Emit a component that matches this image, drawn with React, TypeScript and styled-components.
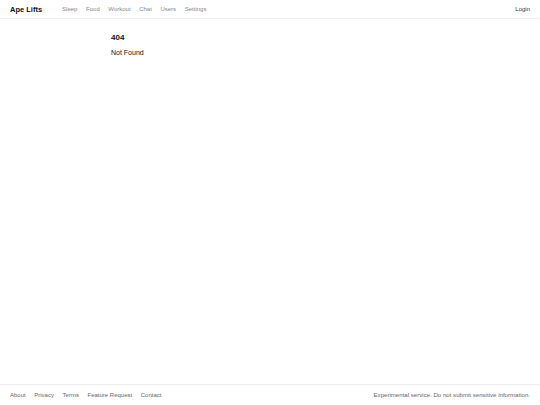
import React from "react";
import styled, { createGlobalStyle } from "styled-components";

const GlobalStyle = createGlobalStyle`
  html, body {
    margin: 0;
    padding: 0;
    background: #fff;
  }
  body {
    font-family: "Liberation Sans", Arial, sans-serif;
    color: #111;
    -webkit-font-smoothing: antialiased;
  }
`;

const Page = styled.div`
  display: flex;
  flex-direction: column;
  min-height: 100vh;
`;

const Header = styled.header`
  display: flex;
  align-items: center;
  height: 19px;
  padding: 0 10px;
  border-bottom: 1px solid #eeeeee;
  box-sizing: border-box;
`;

const Brand = styled.a`
  font-size: 7.5px;
  font-weight: 700;
  color: #111;
  text-decoration: none;
  margin-right: 20px;
`;

const Nav = styled.nav`
  display: flex;
  gap: 8.6px;
  flex: 1;
`;

const NavLink = styled.a<{ $strong?: boolean }>`
  font-size: 6px;
  color: ${(p) => (p.$strong ? "#333" : "#888")};
  text-decoration: none;
`;

const Main = styled.main`
  flex: 1;
  width: 318px;
  margin: 0 auto;
  padding-top: 14px;
`;

const Title = styled.h1`
  font-size: 8px;
  font-weight: 700;
  margin: 0 0 7px;
`;

const Message = styled.p`
  font-size: 7px;
  margin: 0;
`;

const Footer = styled.footer`
  display: flex;
  align-items: center;
  justify-content: space-between;
  height: 21px;
  padding: 0 10px 1px;
  border-top: 1px solid #eeeeee;
  box-sizing: border-box;
`;

const FooterLinks = styled.div`
  display: flex;
  gap: 8.6px;
`;

const FooterLink = styled.a`
  font-size: 6px;
  color: #666;
  text-decoration: none;
`;

const Notice = styled.span`
  font-size: 6.1px;
  color: #666;
`;

const navItems = ["Sleep", "Food", "Workout", "Chat", "Users", "Settings"];
const footerItems = ["About", "Privacy", "Terms", "Feature Request", "Contact"];

export default function App() {
  return (
    <>
      <GlobalStyle />
      <Page>
        <Header>
          <Brand href="#">Ape Lifts</Brand>
          <Nav>
            {navItems.map((item) => (
              <NavLink key={item} href="#">
                {item}
              </NavLink>
            ))}
          </Nav>
          <NavLink href="#" $strong>
            Login
          </NavLink>
        </Header>
        <Main>
          <Title>404</Title>
          <Message>Not Found</Message>
        </Main>
        <Footer>
          <FooterLinks>
            {footerItems.map((item) => (
              <FooterLink key={item} href="#">
                {item}
              </FooterLink>
            ))}
          </FooterLinks>
          <Notice>Experimental service. Do not submit sensitive information.</Notice>
        </Footer>
      </Page>
    </>
  );
}
